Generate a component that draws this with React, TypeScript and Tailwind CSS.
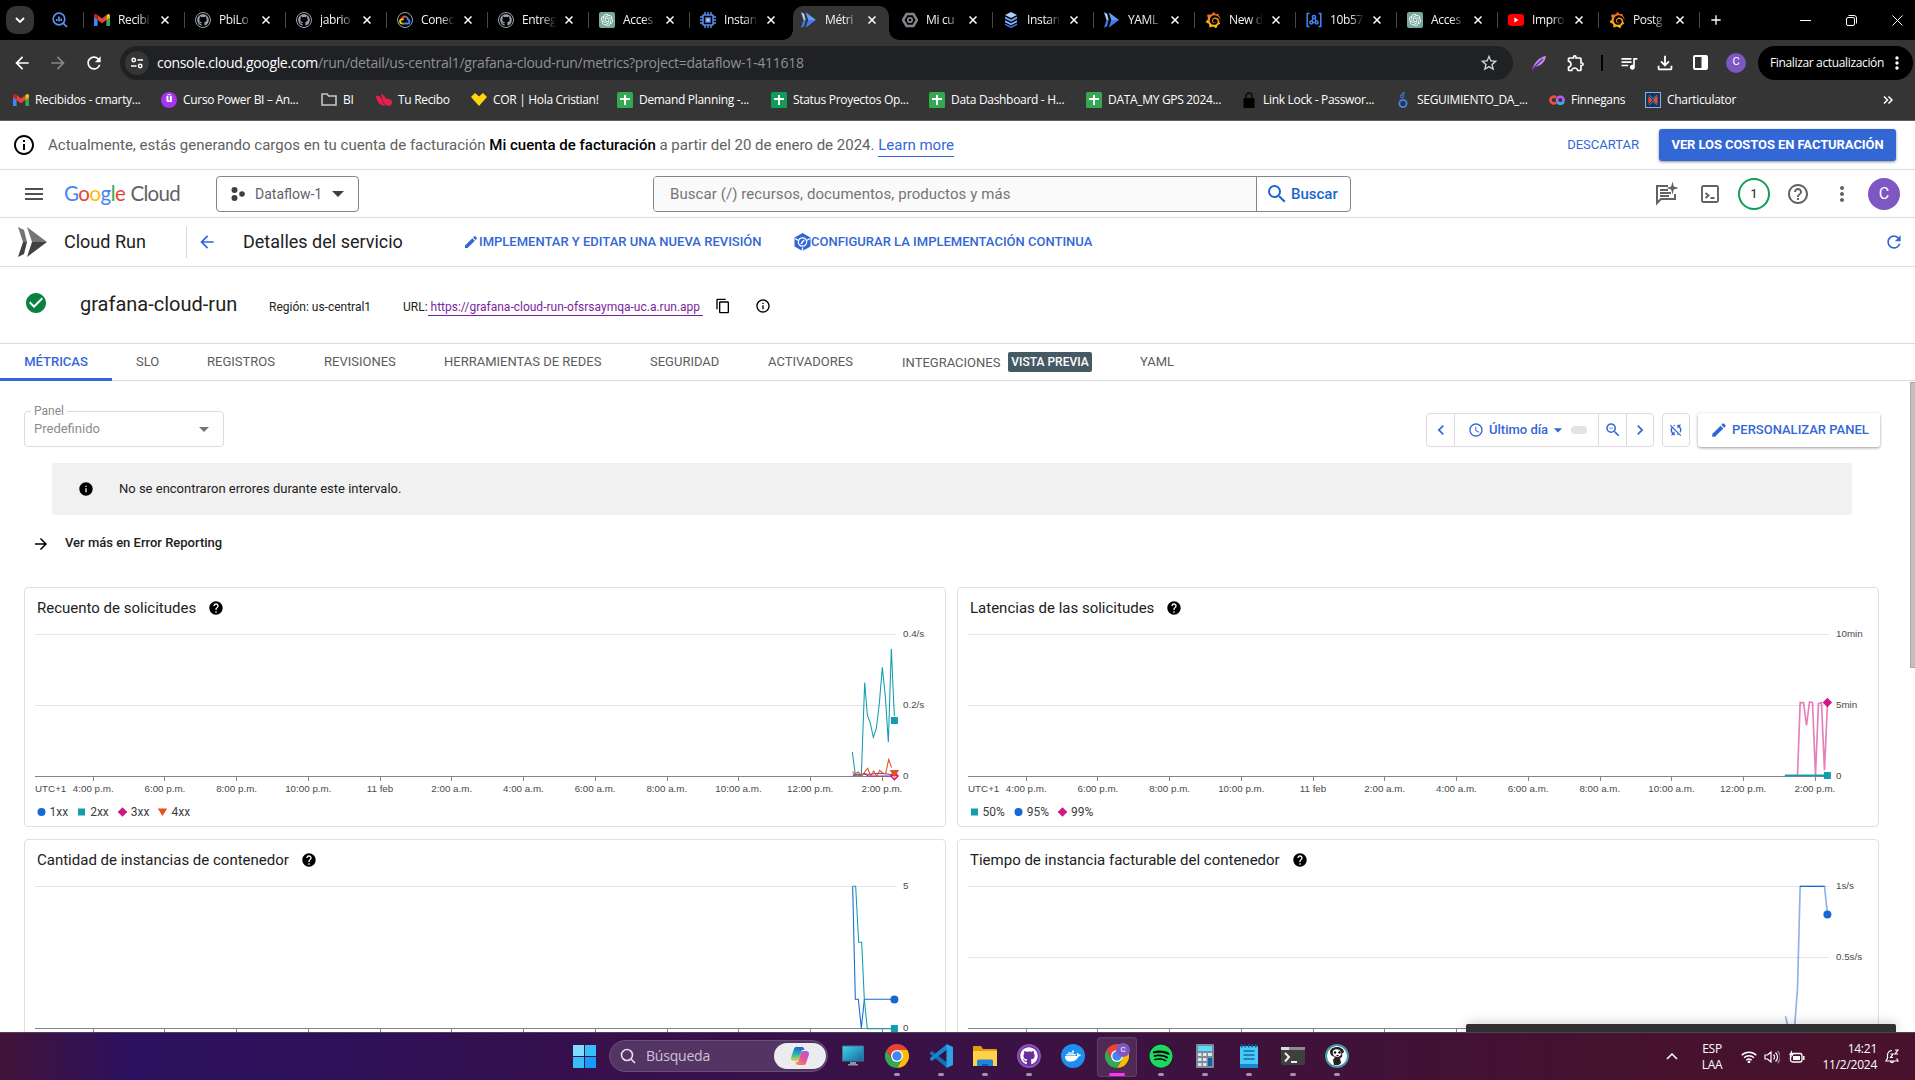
import React from "react";
import {
  MdAccessTime, MdAdd, MdArrowBack, MdArrowDropDown, MdArrowForward, MdCheckCircle, MdChevronLeft, MdChevronRight,
  MdContentCopy, MdEdit, MdHelp, MdHelpOutline, MdInfo, MdMenu, MdMoreVert, MdOutlineExtension, MdOutlineFileDownload,
  MdInfoOutline, MdQueueMusic, MdRefresh, MdSearch, MdStarBorder, MdSyncDisabled, MdZoomOut,
} from "react-icons/md";
import { FaDocker, FaGithub, FaSpotify } from "react-icons/fa";
import { SiGrafana, SiOpenai } from "react-icons/si";

/* ---------- small drawings ---------- */

function Gmail() {
  return (
    <svg viewBox="0 0 16 12" className="h-3 w-4">
      <path d="M0 1.5V12h3.6V5z" fill="#4285f4" />
      <path d="M12.4 5v7H16V1.5z" fill="#34a853" />
      <path d="M3.6 1v5L8 9.3 12.4 6V1L8 4.4z" fill="#ea4335" />
      <path d="M0 1.6C0 .2 1.6-.4 2.6.4l1 .7V6L0 3.3z" fill="#c5221f" />
      <path d="M16 1.6C16 .2 14.4-.4 13.4.4l-1 .7V6L16 3.3z" fill="#fbbc04" />
    </svg>
  );
}

function Run({ mono = false }: { mono?: boolean }) {
  const [a, b] = mono ? ["#757575", "#424242"] : ["#aecbfa", "#3f7df0"];
  return (
    <svg viewBox="0 0 29 30" className="h-full w-full">
      <path d="M0 0l6 3 3 12H5z" fill={a} />
      <path d="M5 15h4L6 27l-6 3z" fill={b} />
      <path d="M9 0l20 15H14z" fill={mono ? a : "#669df6"} />
      <path d="M14 15h15L9 30z" fill={b} />
    </svg>
  );
}

function GitHubTab() {
  return (
    <span className="flex size-4 items-center justify-center rounded-full border border-gray-400">
      <FaGithub className="size-3 text-gray-400" />
    </span>
  );
}

function CloudTab() {
  return (
    <span className="flex size-4 items-center justify-center rounded-full border border-gray-400">
      <svg viewBox="0 0 12 10" className="h-2.5 w-3" fill="none" strokeWidth="2">
        <path d="M3.2 3.4A3 3 0 0 1 7.5 2" stroke="#ea4335" />
        <path d="M7.4 2a3 3 0 0 1 1.5 2.4A2.2 2.2 0 0 1 9 8.6H6" stroke="#4285f4" />
        <path d="M6 8.6H3" stroke="#34a853" />
        <path d="M3.2 8.6a2.2 2.2 0 0 1-.6-4.3c.8-.2 1.5 0 2 .6" stroke="#fbbc04" />
      </svg>
    </span>
  );
}

function OpenAi() {
  return (
    <span className="flex size-4 items-center justify-center rounded-xs bg-[#75a99c]">
      <SiOpenai className="size-3 text-white" />
    </span>
  );
}

function Chip() {
  return (
    <svg viewBox="0 0 16 16" className="size-4" fill="none" stroke="#5c94f5" strokeWidth="1.4">
      <rect x="3" y="3" width="10" height="10" />
      <rect x="6" y="6" width="4" height="4" fill="#aecbfa" />
      <path d="M5 0v3M8 0v3M11 0v3M5 13v3M8 13v3M11 13v3M0 5h3M0 8h3M0 11h3M13 5h3M13 8h3M13 11h3" />
    </svg>
  );
}

function Billing() {
  return (
    <svg viewBox="0 0 16 16" className="size-4" fill="none" stroke="#80868b">
      <path d="M4.6 2h6.8L15 8l-3.6 6H4.6L1 8z" strokeWidth="2.6" />
      <circle cx="8" cy="8" r="2.2" strokeWidth="1.8" />
    </svg>
  );
}

function Layers() {
  return (
    <svg viewBox="0 0 16 16" className="size-4">
      <path d="M8 0l6 3-6 3-6-3z" fill="#aecbfa" />
      <path d="M2 4.5l6 3 6-3v2.2l-6 3-6-3z" fill="#669df6" />
      <path d="M2 8.2l6 3 6-3v2l-6 3-6-3z" fill="#8ab4f8" />
      <path d="M2 11.4l6 3 6-3V13l-6 3-6-3z" fill="#4285f4" />
    </svg>
  );
}

function Grafana() {
  return (
    <span className="size-4">
      <svg className="absolute size-0">
        <linearGradient id="grafana" x1="0" y1="0" x2="0" y2="1">
          <stop offset="0" stopColor="#f05a28" />
          <stop offset="1" stopColor="#fbca0a" />
        </linearGradient>
      </svg>
      <SiGrafana className="size-4" fill="url(#grafana)" />
    </span>
  );
}

function Bracket() {
  return (
    <svg viewBox="0 0 16 16" className="size-4" fill="none" stroke="#4285f4" strokeWidth="1.5">
      <path d="M3.5 1.5H1.200v13h2.300M12.500 1.500h2.300v13h-2.300" />
      <circle cx="8" cy="5" r="1.6" />
      <circle cx="5.3" cy="10.5" r="1.4" />
      <circle cx="10.7" cy="10.5" r="1.4" />
      <path d="M7.2 6.500L5.800 9M8.800 6.500l1.400 2.500M6.800 10.500h2.400" />
    </svg>
  );
}

function YouTube() {
  return (
    <svg viewBox="0 0 16 12" className="h-3 w-4">
      <rect width="16" height="12" rx="3" fill="#f00" />
      <path d="M6.4 3.6v4.8L10.4 6z" fill="#fff" />
    </svg>
  );
}

function Sheets({ dark = false }: { dark?: boolean }) {
  return (
    <svg viewBox="0 0 16 16" className="size-4">
      <rect width="16" height="16" rx="1.5" fill={dark ? "#0f9d58" : "#34a853"} />
      <path d="M7 3h2v3h4v2H9v5H7V8H3V6h4z" fill="#fff" />
    </svg>
  );
}

function ChromeLogo() {
  return (
    <svg viewBox="0 0 48 48" className="size-6">
      <path d="M24 12h20.8A24 24 0 0 1 24 48l10.4-18z" fill="#fbbc04" />
      <path d="M3.2 12A24 24 0 0 0 24 48l10.4-18L24 24l-10.4 6z" fill="#34a853" />
      <path d="M3.2 12A24 24 0 0 1 44.8 12H24L13.6 30z" fill="#ea4335" />
      <circle cx="24" cy="24" r="12" fill="#fff" />
      <circle cx="24" cy="24" r="9.4" fill="#4285f4" />
    </svg>
  );
}

/* ---------- browser chrome ---------- */

const tabs: { title: string; icon: React.ReactNode }[] = [
  { title: "Recibi", icon: <Gmail /> },
  { title: "PbiLo", icon: <GitHubTab /> },
  { title: "jabrio", icon: <GitHubTab /> },
  { title: "Conec", icon: <CloudTab /> },
  { title: "Entreg", icon: <GitHubTab /> },
  { title: "Acces", icon: <OpenAi /> },
  { title: "Instan", icon: <Chip /> },
  { title: "Métri", icon: <span className="h-4 w-[15px]"><Run /></span> },
  { title: "Mi cu", icon: <Billing /> },
  { title: "Instan", icon: <Layers /> },
  { title: "YAML", icon: <span className="h-4 w-[15px]"><Run /></span> },
  { title: "New d", icon: <Grafana /> },
  { title: "10b57", icon: <Bracket /> },
  { title: "Acces", icon: <OpenAi /> },
  { title: "Impro", icon: <YouTube /> },
  { title: "Postg", icon: <Grafana /> },
];

function Cross() {
  return (
    <svg viewBox="0 0 8 8" className="size-2 shrink-0" stroke="#fff" strokeWidth="1.5">
      <path d="M.5.5l7 7M7.500.5l-7 7" />
    </svg>
  );
}

function TabStrip() {
  return (
    <div className="flex h-10 items-stretch bg-black">
      <div className="flex w-[83px] shrink-0 items-center">
        <div className="ml-1.5 flex h-7 w-7 items-center justify-center rounded-[10px] bg-[#353535]">
          <svg viewBox="0 0 10 6" className="h-1.5 w-2.5" fill="none" stroke="#fff" strokeWidth="1.8"><path d="M1 1l4 4 4-4" /></svg>
        </div>
        <svg viewBox="0 0 16 16" className="ml-[18px] size-4" fill="none" stroke="#5e8ff0" strokeWidth="1.7">
          <circle cx="7" cy="7" r="5.8" />
          <path d="M11.3 11.3L15 15M4.8 7v2M7 4.5v5M9.2 6.5v2.5" />
        </svg>
      </div>
      {tabs.map((tab, i) => {
        const active = i === 7;
        return (
          <div key={i} className="relative flex w-[101px] shrink-0 items-center">
            {active && (
              <div className="absolute top-1.5 left-[3px] h-[34px] w-[96px] rounded-t-[10px] bg-[#353535] before:absolute before:bottom-0 before:-left-2.5 before:size-2.5 before:bg-[radial-gradient(circle_at_0_0,black_9.5px,#353535_10px)] after:absolute after:-right-2.5 after:bottom-0 after:size-2.5 after:bg-[radial-gradient(circle_at_100%_0,black_9.5px,#353535_10px)]" />
            )}
            <div className={active || i === 8 ? "h-4 w-px" : "h-4 w-px bg-[#474747]"} />
            <div className="relative ml-2.5 flex w-4 shrink-0 items-center">{tab.icon}</div>
            <div className="relative ml-2 w-9 font-['Open_Sans',sans-serif] text-xs tracking-[-0.35px] whitespace-nowrap text-gray-100 [mask-image:linear-gradient(to_right,black_20px,transparent_34px)]">
              {tab.title}
            </div>
            <div className="relative ml-[7px] flex"><Cross /></div>
          </div>
        );
      })}
      <div className="flex grow items-center">
        <div className="h-4 w-px bg-[#474747]" />
        <MdAdd className="ml-2 size-4 text-white" />
        <div className="ml-auto flex items-center gap-[35px] pr-3">
          <svg viewBox="0 0 11 11" className="size-[11px]" stroke="#fff"><path d="M0 5.500h11" /></svg>
          <svg viewBox="0 0 11 11" className="size-[11px]" fill="none" stroke="#fff"><rect x=".5" y="2.5" width="8" height="8" rx="1.5" /><path d="M2.500.5H8a2.500 2.500 0 0 1 2.500 2.500v5.500" /></svg>
          <svg viewBox="0 0 11 11" className="size-[11px]" stroke="#fff"><path d="M.5.5l10 10M10.500.5l-10 10" /></svg>
        </div>
      </div>
    </div>
  );
}

function AddressBar() {
  return (
    <div className="flex h-[43px] items-center pt-0.5 pl-3 text-white">
      <MdArrowBack className="size-5" />
      <MdArrowForward className="ml-4 size-5 text-[#868686]" />
      <MdRefresh className="ml-4 size-5" />
      <div className="ml-4 flex h-[34px] w-[1393px] items-center rounded-full bg-[#202124] pl-[5px] font-['Open_Sans',sans-serif] text-sm">
        <div className="mr-2 flex size-6 items-center justify-center rounded-full bg-[#353535]">
          <svg viewBox="0 0 12 12" className="size-3" fill="none" stroke="#fff" strokeWidth="1.5">
            <circle cx="2.7" cy="3" r="1.7" /><path d="M6.5 3H12M0 9h5.5" /><circle cx="9.2" cy="9" r="1.7" />
          </svg>
        </div>
        <span className="tracking-[-0.32px]">console.cloud.google.com</span>
        <span className="tracking-[-0.26px] text-[#8f9194]">/run/detail/us-central1/grafana-cloud-run/metrics?project=dataflow-1-411618</span>
        <MdStarBorder className="mr-3.5 ml-auto size-5 text-gray-300" />
      </div>
      <svg viewBox="0 0 16 16" className="ml-[18px] size-4"><path d="M1 15C3 8 8 2 15 1c-1 7-6 10-11 11z" fill="#c58bf0" /><path d="M1 15C5 10 8 7 12 4" stroke="#6b2fa0" strokeWidth="1.4" /></svg>
      <MdOutlineExtension className="ml-[19px] size-5" />
      <div className="ml-[15px] h-4 w-0.5 bg-black" />
      <MdQueueMusic className="ml-4 size-5" />
      <MdOutlineFileDownload className="ml-[15px] size-[22px]" />
      <svg viewBox="0 0 15 15" className="ml-[17px] size-[15px]"><rect x="1" y="1" width="13" height="13" rx="1" fill="none" stroke="#fff" strokeWidth="2" /><path d="M8.500 1H14v13H8.500z" fill="#fff" /></svg>
      <div className="ml-[18px] flex size-5 items-center justify-center rounded-full bg-[#7e57c2] font-['Roboto',sans-serif] text-[11px]">C</div>
      <div className="ml-3 flex h-[34px] w-[155px] shrink-0 items-center rounded-full bg-black pr-1.5 pl-3 font-['Open_Sans',sans-serif] text-xs tracking-[-0.35px] whitespace-nowrap">
        Finalizar actualización
        <MdMoreVert className="ml-auto size-5 shrink-0" />
      </div>
    </div>
  );
}

const bookmarks: { text: string; icon: React.ReactNode; w: string }[] = [
  { text: "Recibidos - cmarty...", icon: <Gmail />, w: "w-[148px]" },
  { text: "Curso Power BI – An...", icon: <span className="flex size-4 items-center justify-center rounded-full bg-[#a435f0] font-['Roboto',sans-serif] text-[11px] font-black">û</span>, w: "w-[160px]" },
  { text: "BI", icon: <svg viewBox="0 0 16 13" className="h-[13px] w-4" fill="none" stroke="#c4c7c5" strokeWidth="1.6"><path d="M1 1h5l1.600 2H15v9H1z" /></svg>, w: "w-[55px]" },
  { text: "Tu Recibo", icon: <svg viewBox="0 0 16 12" className="h-3 w-4" fill="#e91e4d"><path d="M0 2C3 1 5 3 6 6s2 5 4 6C5 12 1 9 0 2zM5 0c4 1 4 5 7 5s4 2 4 4-3 4-6 2S6 5 5 0z" /></svg>, w: "w-[95px]" },
  { text: "COR | Hola Cristian!", icon: <svg viewBox="0 0 16 13" className="h-[13px] w-4" fill="#ffd60a"><path d="M0 4l4-4 4 3.500L12 0l4 4-8 9z" /></svg>, w: "w-[146px]" },
  { text: "Demand Planning -...", icon: <Sheets />, w: "w-[154px]" },
  { text: "Status Proyectos Op...", icon: <Sheets dark />, w: "w-[158px]" },
  { text: "Data Dashboard - H...", icon: <Sheets />, w: "w-[157px]" },
  { text: "DATA_MY GPS 2024...", icon: <Sheets />, w: "w-[155px]" },
  { text: "Link Lock - Passwor...", icon: <svg viewBox="0 0 16 16" className="size-4"><rect x="2.500" y="6" width="11" height="10" rx="1" /><path d="M5 7V4a3 3 0 0 1 6 0v3" fill="none" stroke="#111" strokeWidth="1.800" /></svg>, w: "w-[154px]" },
  { text: "SEGUIMIENTO_DA_...", icon: <svg viewBox="0 0 16 16" className="size-4" fill="none" stroke="#4285f4"><circle cx="8" cy="11.500" r="3.600" strokeWidth="1.800" /><circle cx="7" cy="4.300" r="1.600" /><circle cx="8.500" cy="1.300" r=".9" /></svg>, w: "w-[154px]" },
  { text: "Finnegans", icon: <svg viewBox="0 0 16 10" className="h-2.5 w-4" fill="none" strokeWidth="2.600"><path d="M7 2.500A3.300 3.300 0 1 0 7 7.500" stroke="#f2503b" /><circle cx="11.300" cy="5" r="3.300" stroke="#b45cf0" /><path d="M8.500 7a3.300 3.300 0 0 0 6 0" stroke="#22b8e6" /></svg>, w: "w-[96px]" },
  { text: "Charticulator", icon: <svg viewBox="0 0 16 16" className="size-4"><rect x=".5" y=".5" width="15" height="15" fill="#1b3350" stroke="#7fb2ea" /><path d="M3.500 4l4 4-4 4z" fill="#ef4b3f" /><path d="M12.500 3.500v9L8 8z" fill="#ef4b3f" /><path d="M4 3l4 3.500L12 3M4 13l4-3.500L12 13" stroke="#3d8ee8" fill="none" /></svg>, w: "w-[110px]" },
];

function Bookmarks() {
  return (
    <div className="flex h-[37px] items-center pl-[13px] pb-1 font-['Open_Sans',sans-serif] text-xs tracking-[-0.31px] text-white">
      {bookmarks.map((b) => (
        <div key={b.text} className={`flex shrink-0 items-center gap-1.5 whitespace-nowrap ${b.w}`}>
          {b.icon}
          {b.text}
        </div>
      ))}
      <svg viewBox="0 0 10 8" className="mr-[22px] ml-auto h-2 w-2.5" fill="none" stroke="#fff" strokeWidth="1.5"><path d="M1 .5L4.500 4 1 7.500M5.500.5L9 4 5.500 7.500" /></svg>
    </div>
  );
}

/* ---------- cloud console ---------- */

function BillingBanner() {
  return (
    <div className="flex h-[49px] items-center border-b border-[#dadce0] pr-[19px] pl-3">
      <MdInfoOutline className="size-6 text-black" />
      <p className="ml-3 text-[15px] text-[#616161]">
        Actualmente, estás generando cargos en tu cuenta de facturación{" "}
        <span className="font-medium text-black">Mi cuenta de facturación</span> a partir del 20 de enero de 2024.{" "}
        <span className="border-b border-[#3367d6] pb-0.5 text-[#3367d6]">Learn more</span>
      </p>
      <span className="ml-auto text-[13px] text-[#3367d6]">DESCARTAR</span>
      <span className="ml-5 flex h-8 w-[237px] items-center justify-center rounded-[3px] bg-[#3367d6] text-[13px] font-bold tracking-[-0.08px] text-white shadow-[0_1px_3px_rgba(0,0,0,0.45)]">
        VER LOS COSTOS EN FACTURACIÓN
      </span>
    </div>
  );
}

function Header() {
  return (
    <div className="flex h-12 items-center border-b border-[#dadce0] pl-[22px] text-[#5f6368]">
      <MdMenu className="size-6 text-[#4d5156]" />
      <div className="ml-[18px] flex w-[152px] items-baseline gap-[5px] font-['Lato','Roboto',sans-serif] text-[20.5px] tracking-[-0.5px]">
        <span>
          <span className="text-[#4285f4]">G</span><span className="text-[#ea4335]">o</span><span className="text-[#fbbc04]">o</span>
          <span className="text-[#4285f4]">g</span><span className="text-[#34a853]">l</span><span className="text-[#ea4335]">e</span>
        </span>
        <span className="tracking-[-0.7px]">Cloud</span>
      </div>
      <div className="flex h-9 w-[143px] items-center rounded border border-[#80868b] pl-3.5 text-[15px] text-[#5f6368]">
        <svg viewBox="0 0 14 14" className="size-3.5" fill="#3c4043"><circle cx="3.500" cy="3" r="3" /><circle cx="11" cy="7" r="2.800" /><circle cx="3.500" cy="11" r="3" /></svg>
        <span className="ml-2.5 text-sm">Dataflow-1</span>
        <svg viewBox="0 0 12 6" className="ml-2.5 h-1.5 w-3" fill="#3c4043"><path d="M0 0h12L6 6z" /></svg>
      </div>
      <div className="ml-[294px] flex h-9 w-[698px] items-stretch overflow-hidden rounded border border-[#80868b]">
        <div className="flex w-[603px] items-center border-r border-[#80868b] bg-[#fafafa] pt-px pl-4 text-[15px] tracking-[0.08px] text-[#757575]">
          Buscar (/) recursos, documentos, productos y más
        </div>
        <div className="flex items-center pt-px pl-2 text-[15px] font-medium text-[#1967d2]">
          <MdSearch className="mr-0.5 size-6" />
          Buscar
        </div>
      </div>
      <div className="ml-auto flex items-center pr-[15px] text-[#5f6368]">
        <svg viewBox="0 0 24 24" className="size-6" fill="none" stroke="#5f6368" strokeWidth="2">
          <path d="M14 4H3v17l4-4h14v-5" /><path d="M6 8h8M6 11h11M6 14h9" />
          <path d="M18.500-.5l1.300 5 4.700 1.500-4.700 1.500-1.300 5-1.300-5L12.500 6l4.700-1.500z" fill="#5f6368" stroke="none" />
        </svg>
        <svg viewBox="0 0 18 18" className="ml-[23px] size-[18px]" fill="none" stroke="#5f6368" strokeWidth="1.900">
          <rect x="1" y="1" width="16" height="16" rx="1.500" /><path d="M4.500 8l3 2.500-3 2.500M9.500 13h4" />
        </svg>
        <span className="ml-[19px] flex size-8 items-center justify-center rounded-full border-2 border-[#0f9d58] text-xs font-medium text-[#3c4043]">1</span>
        <MdHelpOutline className="ml-4 size-6" />
        <MdMoreVert className="ml-5 size-6" />
        <span className="ml-3.5 flex size-8 items-center justify-center rounded-full bg-[#7e57c2] text-base text-white">C</span>
      </div>
    </div>
  );
}

function ServiceBar() {
  return (
    <div className="flex h-[49px] items-center border-b border-[#dadce0] pl-[18px] text-lg text-[#212121]">
      <span className="h-[30px] w-[29px]"><Run mono /></span>
      <span className="ml-[17px] w-[122px]">Cloud Run</span>
      <span className="h-8 w-px bg-[#dadce0]" />
      <MdArrowBack className="ml-2.5 size-5 text-[#3367d6]" />
      <span className="ml-[26px] w-[220px]">Detalles del servicio</span>
      <span className="flex w-[331px] items-center text-[13px] font-medium text-[#3367d6]">
        <MdEdit className="size-4" />
        IMPLEMENTAR Y EDITAR UNA NUEVA REVISIÓN
      </span>
      <span className="flex items-center text-[13px] font-medium text-[#3367d6]">
        <svg viewBox="0 0 17 18" className="h-[18px] w-[17px]">
          <path d="M8.500 0L16.500 4.500v9L8.500 18 .5 13.500v-9z" fill="#3367d6" />
          <path d="M1 5.500l3 1.700M16 5.500l-3 1.700M8.500 14.500V18" stroke="#fff" strokeWidth="1.300" />
          <circle cx="8.500" cy="9" r="4.200" fill="none" stroke="#fff" strokeWidth="1.200" /><path d="M7 11l3-4" stroke="#fff" strokeWidth="1.400" />
        </svg>
        <span>CONFIGURAR LA IMPLEMENTACIÓN CONTINUA</span>
      </span>
      <MdRefresh className="mr-[11px] ml-auto size-5 text-[#3367d6]" />
    </div>
  );
}

function ServiceName() {
  return (
    <div className="flex h-[77px] items-center border-b border-[#dadce0] pl-6 text-xs text-[#212121]">
      <MdCheckCircle className="mb-1 size-6 text-[#0b8043]" />
      <span className="mb-0.5 ml-8 w-[189px] text-xl">grafana-cloud-run</span>
      <span className="mt-1 w-[134px]">Región: us-central1</span>
      <span className="mt-1">URL:</span>
      <span className="mt-[5px] w-[275px] border-b border-[#7b1fa2] pl-[3px] leading-[15px] text-[#7b1fa2]">https://grafana-cloud-run-ofsrsaymqa-uc.a.run.app</span>
      <MdContentCopy className="mt-0.5 ml-3 size-4 text-black" />
      <MdInfoOutline className="mt-0.5 ml-6 size-4 text-black" />
    </div>
  );
}

function Tabs() {
  return (
    <div className="flex h-[37px] items-center border-b border-[#dadce0] text-[13px] text-[#5c5c5c]">
      <span className="flex h-[37px] w-28 items-center justify-center border-b-[3px] border-[#3367d6] pt-[3px] font-medium text-[#3367d6]">MÉTRICAS</span>
      <span className="ml-6 w-[71px]">SLO</span>
      <span className="w-[117px]">REGISTROS</span>
      <span className="w-[120px]">REVISIONES</span>
      <span className="w-[206px]">HERRAMIENTAS DE REDES</span>
      <span className="w-[118px]">SEGURIDAD</span>
      <span className="w-[134px]">ACTIVADORES</span>
      <span className="flex w-[238px] items-center">
        <span className="w-[106px] pt-px">INTEGRACIONES</span>
        <span className="flex h-5 w-[84px] items-center justify-center rounded-xs bg-[#455a64] text-xs font-medium text-white">VISTA PREVIA</span>
      </span>
      <span>YAML</span>
    </div>
  );
}

function Toolbar() {
  return (
    <div className="flex h-9 items-start pr-[35px] pl-6 text-[#3367d6]">
      <div className="relative flex h-9 w-[200px] items-center rounded border border-[#dadce0] pl-[9px] text-[13px] text-[#8b8b8b]">
        <span className="absolute -top-[9px] left-1.5 bg-white px-[3px] text-xs leading-4">Panel</span>
        Predefinido
        <svg viewBox="0 0 10 5" className="mr-3.5 ml-auto h-[5px] w-2.5" fill="#757575"><path d="M0 0h10L5 5z" /></svg>
      </div>
      <div className="mt-0.5 ml-auto flex h-[34px] w-[228px] items-stretch rounded border border-[#dadce0]">
        <span className="flex w-7 items-center justify-center border-r border-[#dadce0]"><MdChevronLeft className="size-5" /></span>
        <span className="flex w-[144px] items-center border-r border-[#dadce0] pl-[13px] text-[13px] font-medium">
          <MdAccessTime className="mr-[5px] size-4" />
          Último día
          <MdArrowDropDown className="size-5" />
          <span className="ml-[3px] h-2 w-4 rounded bg-[#e3e3e3]" />
        </span>
        <span className="flex w-7 items-center justify-center border-r border-[#dadce0]"><MdZoomOut className="size-[18px]" /></span>
        <span className="flex w-[26px] items-center justify-center"><MdChevronRight className="size-5" /></span>
      </div>
      <span className="mt-0.5 ml-2 flex h-[34px] w-7 items-center justify-center rounded border border-[#dadce0]"><MdSyncDisabled className="size-4" /></span>
      <span className="mt-0.5 ml-2 flex h-[34px] w-[182px] items-center rounded-[3px] bg-white pl-3 text-[13px] font-medium shadow-[0_1px_3px_rgba(0,0,0,0.4)]">
        <MdEdit className="mr-1 size-[18px]" />
        PERSONALIZAR PANEL
      </span>
    </div>
  );
}

/* ---------- charts ---------- */

type Shape = "circle" | "square" | "diamond" | "triangle";
const BLUE = "#1967d2";
const TEAL = "#129eaf";
const PINK = "#d01884";
const ORANGE = "#e8501e";

function Marker({ shape, x, y, color }: { shape: Shape; x: number; y: number; color: string }) {
  if (shape === "circle") return <circle cx={x} cy={y} r="4" fill={color} />;
  if (shape === "square") return <rect x={x - 3.5} y={y - 3.5} width="7" height="7" fill={color} />;
  if (shape === "diamond") return <path d={`M${x} ${y - 4.7}l4.700 4.700-4.700 4.700-4.700-4.700z`} fill={color} />;
  return <path d={`M${x - 4.7} ${y - 3.5}h9.400l-4.700 7.500z`} fill={color} />;
}

const hours = ["4:00 p.m.", "6:00 p.m.", "8:00 p.m.", "10:00 p.m.", "11 feb", "2:00 a.m.", "4:00 a.m.", "6:00 a.m.", "8:00 a.m.", "10:00 a.m.", "12:00 p.m.", "2:00 p.m."];

function Plot({ labels, children }: { labels: [string, string, string]; children: React.ReactNode }) {
  return (
    <svg viewBox="0 0 910 182" className="ml-[10px] block h-[182px] w-[910px] font-['Liberation_Sans',sans-serif] text-[9.8px]" fill="#4a4a4a">
      <path d="M0 16.500h861" stroke="#e6e6e6" />
      {labels[1] && <path d="M0 87.500h861" stroke="#e6e6e6" />}
      <path d="M0 158.500h861" stroke="#80868b" />
      {labels.map((l, i) => <text key={i} x="868" y={19 + i * 71}>{l}</text>)}
      <text x="0" y="174">UTC+1</text>
      {hours.map((h, i) => (
        <g key={h}>
          <path d={`M${58.5 + Math.floor(i * 71.75)} 159v4`} stroke="#80868b" />
          <text x={58.2 + i * 71.7} y="174" textAnchor="middle">{h}</text>
        </g>
      ))}
      {children}
    </svg>
  );
}

function Card({ title, legend, labels, children }: {
  title: string; legend: [Shape, string, string][]; labels: [string, string, string]; children: React.ReactNode;
}) {
  return (
    <section className="h-60 w-[922px] rounded border border-[#dfdfdf] bg-white">
      <h2 className="flex h-[30px] items-center pt-2.5 pl-3 text-[15px] text-[#212121]">
        {title}
        <MdHelp className="mb-px ml-3 size-4 text-black" />
      </h2>
      <Plot labels={labels}>{children}</Plot>
      <div className="mt-1 flex h-4 items-center gap-[9px] pl-[11.5px] text-xs text-[#3c4043]">
        {legend.map(([shape, color, name]) => (
          <span key={name} className="flex items-center gap-1">
            <svg viewBox="0 0 9 10" className="h-2.5 w-[9px]"><Marker shape={shape} x={4.5} y={5} color={color} /></svg>
            {name}
          </span>
        ))}
      </div>
    </section>
  );
}

function Charts() {
  return (
    <div className="grid grid-cols-[922px_922px] gap-x-[11px] gap-y-3 pt-[34px] pl-6">
      <Card title="Recuento de solicitudes" labels={["0.4/s", "0.2/s", "0"]}
        legend={[["circle", BLUE, "1xx"], ["square", TEAL, "2xx"], ["diamond", PINK, "3xx"], ["triangle", ORANGE, "4xx"]]}>
        <g transform="translate(705 -38) scale(.33333)" fill="none" strokeWidth="3.200">
          <path d="M338 583h50l30-3 45 4" stroke={BLUE} />
          <path d="M338 588l14-4 10 4 12-8 10 8h79" stroke={PINK} />
          <path d="M337 516l9 69h18l10-277 8 97 9 25 9 42 9-27 9-75 9-108 9 88 9 137 9-281 9 202" stroke={TEAL} />
          <path d="M337 575l9 6 9-5 10 12 9-12 9-11 9 23 9-15 9 15 9-17 9 8 9 2 9-43 9 25" stroke={ORANGE} />
        </g>
        <Marker shape="square" x={859.4} y={102.5} color={TEAL} />
        <Marker shape="diamond" x={859.4} y={158} color={PINK} />
        <path d="M857 158l2.400 2.400 2.400-2.400z" fill="#fff" />
        <Marker shape="triangle" x={859.4} y={155.5} color={ORANGE} />
      </Card>
      <Card title="Latencias de las solicitudes" labels={["10min", "5min", "0"]}
        legend={[["square", TEAL, "50%"], ["circle", BLUE, "95%"], ["diamond", PINK, "99%"]]}>
        <g transform="translate(591.500 -38) scale(.33333)" fill="none">
          <path d="M714 587l8-219h10l9 68 9-70 9 2 9 217 9-214 9-3 9 203 9-203" stroke={PINK} strokeOpacity=".55" strokeWidth="5" />
          <path d="M676 586h128" stroke={TEAL} strokeWidth="5" />
        </g>
        <Marker shape="diamond" x={859.4} y={84.5} color={PINK} />
        <Marker shape="square" x={859.4} y={157.5} color={TEAL} />
      </Card>
      <Card title="Cantidad de instancias de contenedor" labels={["5", "", "0"]} legend={[]}>
        <g transform="translate(705 -290) scale(.33333)" fill="none" strokeWidth="3.200">
          <path d="M338 919l8 339h9l9 87 9-87h90" stroke={BLUE} />
          <path d="M338 919h9l9 168h9l8 171 9 88h81" stroke={TEAL} />
        </g>
        <Marker shape="circle" x={859.4} y={129.5} color={BLUE} />
        <Marker shape="square" x={859.4} y={158.5} color={TEAL} />
      </Card>
      <Card title="Tiempo de instancia facturable del contenedor" labels={["1s/s", "0.5s/s", "0"]} legend={[]}>
        <g transform="translate(591.500 -290) scale(.33333)" fill="none" strokeWidth="5">
          <path d="M678 1309l9 36h18l9-120 8-306M795 919l9 84" stroke={BLUE} strokeOpacity=".5" />
          <path d="M721 919h75" stroke={BLUE} strokeWidth="4" />
        </g>
        <Marker shape="circle" x={859.4} y={44.5} color={BLUE} />
      </Card>
    </div>
  );
}

/* ---------- Windows taskbar ---------- */

const apps: { icon: React.ReactNode; mark: "none" | "dot" | "active" }[] = [
  {
    icon: <svg viewBox="0 0 24 24" className="size-6"><defs><linearGradient id="mon" x1="0" y1="0" x2="1" y2="1"><stop stopColor="#3fd6e4" /><stop offset="1" stopColor="#1565a8" /></linearGradient></defs><path d="M1.500 2h21v15h-21z" fill="url(#mon)" stroke="#3a7790" /><path d="M9 18h6v2H9zM7 20h10v1.500H7z" fill="#8a97a3" /></svg>,
    mark: "none",
  },
  { icon: <ChromeLogo />, mark: "dot" },
  {
    icon: <svg viewBox="0 0 24 24" className="size-6"><path d="M1 8.500L3 7l15 11.500V24L1 10z" fill="#0f70b8" /><path d="M1 15.500L3 17 18 5.500V0L1 14z" fill="#1a86d0" /><path d="M17.500 0L24 3v18l-6.500 3z" fill="#2ba3ea" /></svg>,
    mark: "dot",
  },
  {
    icon: <svg viewBox="0 0 24 24" className="size-6"><path d="M0 3a1 1 0 0 1 1-1h7l2 3h13a1 1 0 0 1 1 1v15H0z" fill="#e0a010" /><path d="M0 7h24v15H0z" fill="#ffd04a" /><path d="M4 22v-5a1.500 1.500 0 0 1 1.500-1.500h13A1.500 1.500 0 0 1 20 17v5z" fill="#1c86d8" /><path d="M9 20h6v2H9z" fill="#0f5fa8" /></svg>,
    mark: "dot",
  },
  { icon: <span className="flex size-6 items-center justify-center rounded-full border-2 border-[#8d4fb8] bg-[#6a2e9a]"><FaGithub className="size-[18px] text-white" /></span>, mark: "dot" },
  { icon: <span className="flex size-6 items-center justify-center rounded-full bg-[#1d8ff0]"><FaDocker className="size-4 text-white" /></span>, mark: "none" },
  {
    icon: <span className="relative"><ChromeLogo /><span className="absolute -top-px -right-px flex size-3.5 items-center justify-center rounded-full bg-[#7e57c2] font-['Roboto',sans-serif] text-[8px] text-white">C</span></span>,
    mark: "active",
  },
  { icon: <span className="flex size-6 items-center justify-center rounded-full bg-black"><FaSpotify className="size-6 text-[#1ed760]" /></span>, mark: "dot" },
  {
    icon: <svg viewBox="0 0 24 24" className="size-6"><rect x="3" width="18" height="24" rx="1" fill="#7d8b99" /><path d="M5 2h14v5H5z" fill="#5cdcf8" /><path d="M5 9h3.500v3H5zM10 9h3.500v3H10zM15 9h4v3h-4zM5 14h3.500v3H5zM10 14h3.500v3H10zM5 19h3.500v3H5zM10 19h3.500v3H10z" fill="#dfe5ea" /><path d="M15 14h4v8h-4z" fill="#1560a8" /></svg>,
    mark: "dot",
  },
  {
    icon: <svg viewBox="0 0 24 24" className="size-6"><rect x="3" y="2" width="18" height="22" rx="1" fill="#4cc8f4" /><path d="M3 20h18v4H3z" fill="#1b86cf" /><path d="M4 0h1.500v3.500H4zM7.500 0H9v3.500H7.500zM11 0h1.500v3.500H11zM14.500 0H16v3.500h-1.500zM18 0h1.500v3.500H18z" fill="#0d5b94" /><path d="M6.500 7h11M6.500 11h11M6.500 15h11" stroke="#0d6fa8" strokeWidth="1.600" /></svg>,
    mark: "dot",
  },
  {
    icon: <svg viewBox="0 0 24 24" className="size-6"><rect y="3" width="24" height="18" rx="1.500" fill="#3f3f3f" /><path d="M0 3h8v3H0z" fill="#ddd" /><path d="M8 3h16v3H8z" fill="#8c8c8c" /><path d="M4 9l4 4-4 4.500M10 18h6" fill="none" stroke="#eee" strokeWidth="2" /></svg>,
    mark: "dot",
  },
  {
    icon: <svg viewBox="0 0 24 24" className="size-6"><circle cx="12" cy="12" r="11" fill="#fff" stroke="#3f9aa6" strokeWidth="2" /><path d="M5 7c1-3 4-4 7-4s7 2 7 5l-2 2c1 3-1 4-2 4l1 5c-2 3-5 2-7 2l-1-5 2-3C6 12 5 10 5 7z" fill="#2b201e" /><path d="M8 7c2-3 7-2 8 1 1 2 0 4-3 5-4 0-6-3-5-6z" fill="#fff" /><circle cx="10" cy="8.500" r="1.200" /><circle cx="14.500" cy="8.500" r="1.200" /><path d="M11 11h3l-1.500 1.500z" /></svg>,
    mark: "dot",
  },
];

function Taskbar() {
  return (
    <footer className="flex h-12 items-center border-t border-[#51405c] bg-[linear-gradient(to_right,#421338_0px,#2c1160_130px,#2e1158_350px,#37104c_600px,#3c1242_1100px,#45122f_1600px,#49122c_1915px)] pl-[573px] font-['Open_Sans',sans-serif] text-white">
      <div className="grid size-[23px] grid-cols-2 gap-px *:bg-[#38bdfb]">
        <span className="bg-[#7fdcff]!" /><span /><span /><span className="bg-[#159cfb]!" />
      </div>
      <div className="mb-px ml-[13px] flex h-8 w-[219px] items-center rounded-full border border-[#6a4d7d] bg-[#543463] pr-px pl-2.5 text-sm text-[#cfc3d6]">
        <svg viewBox="0 0 16 16" className="mr-2.5 size-4" fill="none" stroke="#e6dfea" strokeWidth="1.600"><circle cx="7" cy="7" r="5.500" /><path d="M11 11l4 4" /></svg>
        <span className="tracking-[-0.2px]">Búsqueda</span>
        <span className="ml-auto flex h-[26px] w-[52px] items-center justify-center rounded-full bg-[#ececee]">
          <svg viewBox="0 0 18 18" className="size-[18px]">
            <defs>
              <linearGradient id="cpA" x1="0" y1="0" x2="0" y2="1"><stop stopColor="#1b5fd0" /><stop offset=".5" stopColor="#25b4b0" /><stop offset="1" stopColor="#e9d44a" /></linearGradient>
              <linearGradient id="cpB" x1="1" y1="0" x2="0" y2="1"><stop stopColor="#a05ae8" /><stop offset=".5" stopColor="#e8549a" /><stop offset="1" stopColor="#f59a4a" /></linearGradient>
            </defs>
            <path d="M5 0h6c1.500 0 2 1 2.500 3H11L8 12c-.5 1.500-1 2-3 2H3c-3 0-3.500-2-2.500-5L3 2C3.500.7 4 0 5 0z" fill="url(#cpA)" />
            <path d="M13 18H7c-1.500 0-2-1-2.500-3H7l3-9c.5-1.500 1-2 3-2h2c3 0 3.500 2 2.500 5L15 16c-.5 1.300-1 2-2 2z" fill="url(#cpB)" />
          </svg>
        </span>
      </div>
      <div className="ml-[3px] flex">
        {apps.map((app, i) => (
          <div key={i} className="relative flex h-12 w-11 items-center justify-center">
            {app.mark === "active" && <span className="absolute inset-x-0.5 top-1 bottom-1 rounded border border-white/10 bg-white/10" />}
            <span className="relative mb-px flex">{app.icon}</span>
            {app.mark === "dot" && <span className="absolute bottom-[5px] h-[3px] w-1.5 rounded-full bg-[#a493ac]" />}
            {app.mark === "active" && <span className="absolute bottom-[5px] h-[3px] w-4 rounded-full bg-[#ff36f0]" />}
          </div>
        ))}
      </div>
      <div className="ml-auto flex items-center pr-4 text-xs leading-4 tracking-[-0.25px]">
        <svg viewBox="0 0 12 7" className="mr-6 h-[7px] w-3" fill="none" stroke="#fff" strokeWidth="1.500"><path d="M1 6l5-5 5 5" /></svg>
        <span className="mr-[19px] text-center">ESP<br />LAA</span>
        <svg viewBox="0 0 16 12" className="w-4" fill="none" stroke="#fff" strokeWidth="1.400"><path d="M.7 4.200a10.500 10.500 0 0 1 14.600 0M3 6.800a7.200 7.200 0 0 1 10 0M5.300 9.200a4 4 0 0 1 5.400 0" /><circle cx="8" cy="11" r=".7" fill="#fff" /></svg>
        <svg viewBox="0 0 16 14" className="ml-[7px] w-4" fill="none" stroke="#fff" strokeWidth="1.200"><path d="M1 5v4h2.500L7 12V2L3.500 5zM9.500 4.500a3.500 3.500 0 0 1 0 5M11.500 2.500a6 6 0 0 1 0 9" /><path d="M13.500 1a8 8 0 0 1 0 12" stroke="#9a8090" /></svg>
        <svg viewBox="0 0 17 13" className="ml-2 w-[17px]"><rect x="2.500" y="3.500" width="11.500" height="8.500" rx="2" fill="none" stroke="#fff" strokeWidth="1.300" /><path d="M5 6h7v4H5zM15 6h1.500v4H15z" fill="#fff" /><path d="M4 0L1 5h2.500L3 8l3.500-5H4z" fill="#fff" /></svg>
        <span className="ml-[17px] text-right">14:21<br />11/2/2024</span>
        <svg viewBox="0 0 14 15" className="ml-2 w-3.5" fill="none" stroke="#fff" strokeWidth="1.200"><path d="M7 1.500a4.500 4.500 0 0 0-4.500 4.500v3L1 12h12l-1.300-2.500M5.500 12.500a1.600 1.600 0 0 0 3 0M5.500 5h2.500L5.500 8.500H8M10 1h3l-3 4h3" /></svg>
      </div>
    </footer>
  );
}

export default function App() {
  return (
    <div className="flex h-[1080px] w-[1915px] flex-col overflow-hidden bg-white font-['Roboto',sans-serif]">
      <div className="bg-[#353535]">
        <TabStrip />
        <AddressBar />
        <Bookmarks />
        <div className="h-px bg-[#5f5f63]" />
      </div>
      <BillingBanner />
      <Header />
      <ServiceBar />
      <ServiceName />
      <Tabs />
      <main className="relative min-h-0 flex-1 overflow-hidden pt-[30px]">
        <Toolbar />
        <div className="mt-4 ml-[52px] flex h-[52px] w-[1800px] items-center rounded-xs bg-[#f1f1f1] pl-[26px] text-[13px] text-[#212121]">
          <MdInfo className="mr-[25px] size-4 text-black" />
          No se encontraron errores durante este intervalo.
        </div>
        <div className="mt-[18px] flex h-5 items-center pl-8 text-[13px] font-medium text-[#212121]">
          <MdArrowForward className="mt-px mr-[15px] size-[18px] text-black" />
          Ver más en Error Reporting
        </div>
        <Charts />
        <div className="absolute top-px right-0 h-[286px] w-[5px] border border-r-0 border-[#a8a8a8] bg-[#c1c1c1]" />
        <div className="absolute right-[19px] bottom-0 h-2 w-[430px] rounded-t-xs bg-[#303030] shadow-[0_0_12px_rgba(0,0,0,0.25)]" />
      </main>
      <Taskbar />
    </div>
  );
}
